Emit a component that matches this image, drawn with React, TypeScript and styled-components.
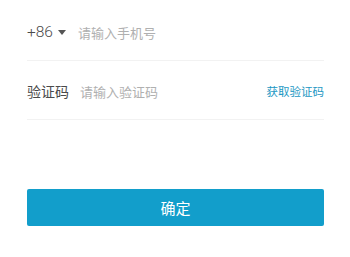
import styled, { createGlobalStyle } from "styled-components"

const Global = createGlobalStyle`
  html, body {
    margin: 0;
    padding: 0;
    background: #fff;
    font-family: "Noto Sans CJK SC", "Liberation Sans", sans-serif;
  }
`

export default function App() {
  return (
    <>
      <Global />
      <Page>
        <Row>
          <Prefix>
            +86
            <Caret />
          </Prefix>
          <Input placeholder="请输入手机号" />
        </Row>
        <Row>
          <Label>验证码</Label>
          <Input placeholder="请输入验证码" />
          <CodeLink>获取验证码</CodeLink>
        </Row>
        <Submit>确定</Submit>
      </Page>
    </>
  )
}

const Page = styled.div`
  padding: 2px 26px 0 27px;
  display: flex;
  flex-direction: column;
`
const Row = styled.div`
  height: 58px;
  display: flex;
  align-items: center;
  border-bottom: 1px solid #f2f2f2;
  padding-top: 2px;
  box-sizing: border-box;
  height: 59px;
`
const Prefix = styled.div`
  display: flex;
  align-items: center;
  width: 51px;
  font-family: "Roboto", "Noto Sans CJK SC", sans-serif;
  font-weight: 300;
  font-size: 15.5px;
  color: #4a4a4a;
`
const Caret = styled.span`
  margin-left: 5px;
  width: 0;
  height: 0;
  border-left: 4px solid transparent;
  border-right: 4px solid transparent;
  border-top: 5px solid #555;
`
const Label = styled.div`
  width: 53px;
  font-size: 14px;
  color: #4a4a4a;
`
const Input = styled.input`
  flex: 1;
  min-width: 0;
  border: none;
  outline: none;
  padding: 0;
  font-family: "Noto Sans CJK SC", sans-serif;
  font-size: 13px;
  color: #333;
  background: transparent;
  &::placeholder {
    color: #b0b0b0;
  }
`
const CodeLink = styled.span`
  font-size: 11.5px;
  color: #1b97c3;
`
const Submit = styled.button`
  margin-top: 69px;
  height: 37px;
  border: none;
  border-radius: 2px;
  background: #129ecb;
  color: #fff;
  font-family: "Noto Sans CJK SC", sans-serif;
  font-size: 15px;
`
